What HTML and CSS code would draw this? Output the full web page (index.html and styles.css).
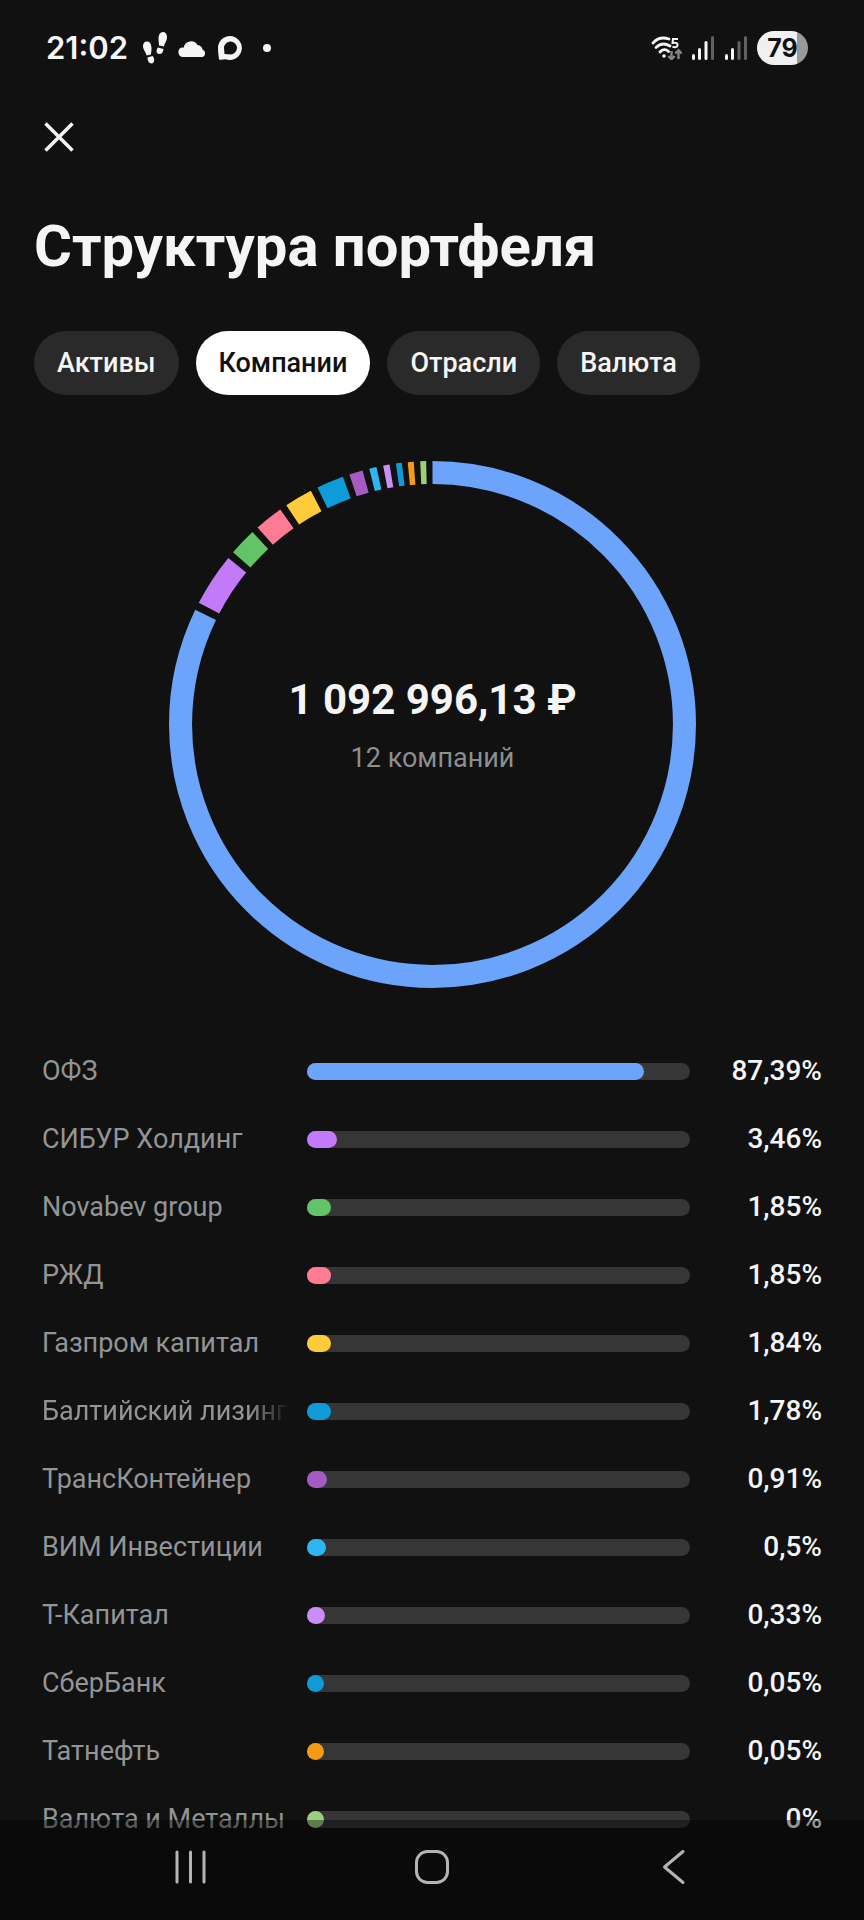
FILE: index.html
```html
<!DOCTYPE html>
<html lang="ru">
<head>
    <meta charset="UTF-8">
    <meta name="viewport" content="width=device-width, initial-scale=1.0">
    <title>Структура портфеля</title>
    <link rel="stylesheet" href="styles.css">
</head>
<body>
    <div class="status-bar">
        <div class="status-left">
            <span class="clock">21:02</span>
            <svg class="icon-steps" viewBox="0 0 26 32" width="26" height="32" fill="currentColor" aria-hidden="true">
                <path d="M1 14c0-3 2-5 4.500-4.500 3 .5 4 3.500 4 7 0 2.500-.5 4-.5 6l-4.500 1C4 20 1 18 1 14z"/>
                <path d="M5.500 25.500l5-1.500c1 1 1.700 2.500 1.700 4 0 2-1 3.500-2.700 3.500-2.500 0-4-3-4-6z"/>
                <path d="M25 5c0-3-1.500-5-4-5-3 0-4.500 3-4.500 7 0 2.500.5 4 .5 6.500l5 1C22.500 11 25 9 25 5z"/>
                <path d="M16 15.500l5.500 1.500c0 3-1.800 5-4 5-1.800 0-3-1-3-2.700 0-1.500.7-2.800 1.500-3.800z"/>
            </svg>
            <svg class="icon-cloud" viewBox="0 0 30 17" width="30" height="17" fill="currentColor" aria-hidden="true">
                <path d="M5 17a5 5 0 0 1-.3-9.500c1 0 1.500 0 2 .2A7.500 7.500 0 0 1 20.500 5c3 .2 4.500 2 5 4.500A4 4 0 0 1 25.500 17z"/>
            </svg>
            <svg class="icon-chat" viewBox="0 0 26 26" width="26" height="26" aria-hidden="true">
                <path fill="currentColor" fill-rule="evenodd" d="M13 1a12 12 0 1 1-4.500 23.200C6.500 24.500 4 25 2 24.500 1.500 20 1 17 1 13A12 12 0 0 1 13 1zm.5 5.500a6.500 6.500 0 0 0-6.500 6.500c0 2 .5 4 .5 6 2 .3 4 .5 6 .5a6.500 6.500 0 0 0 0-13z"/>
            </svg>
            <span class="more-dot"></span>
        </div>
        <div class="status-right">
            <svg viewBox="0 0 32 24" width="32" height="24" fill="none" stroke="currentColor" aria-hidden="true">
                <g stroke-width="2.800" stroke-linecap="round">
                    <path d="M3 7C8 1.500 13 1 19 3"/>
                    <path d="M6 11.500C10 7.500 15 7 20 10"/>
                    <path d="M10 16c2.500-3 6-3 8.500-.5"/>
                </g>
                <circle cx="14" cy="20" r="1.800" fill="currentColor" stroke="none"/>
                <path d="M28 3h-5l-.5 4c4-1 5.500.5 5 2.500-.4 1.800-3 2.200-5 1.200" stroke-width="2"/>
                <g class="dim" stroke-width="2.400">
                    <path d="M21.500 15v8M18.300 20l3.200 3.200L24.700 20"/>
                    <path d="M28.500 23v-8M25.300 17.500l3.200-3.200 3.200 3.200"/>
                </g>
            </svg>
            <svg viewBox="0 0 24 24" width="24" height="24" fill="currentColor" aria-hidden="true">
                <rect x="1" y="18" width="3" height="6" rx="1.500"/>
                <rect x="7" y="12" width="3" height="12" rx="1.500"/>
                <rect x="13.500" y="5" width="3" height="19" rx="1.500"/>
                <rect class="faint" x="20" y="0" width="3" height="24" rx="1.500"/>
            </svg>
            <svg viewBox="0 0 24 24" width="24" height="24" fill="currentColor" aria-hidden="true">
                <rect x="1" y="18" width="3" height="6" rx="1.500"/>
                <rect x="7" y="12" width="3" height="12" rx="1.500"/>
                <rect class="faint" x="13.500" y="5" width="3" height="19" rx="1.500"/>
                <rect class="faint" x="20" y="0" width="3" height="24" rx="1.500"/>
            </svg>
            <span class="battery">79</span>
        </div>
    </div>

    <header>
        <button type="button" class="close-button" aria-label="Закрыть">
            <svg viewBox="0 0 30 30" width="30" height="30" fill="none" stroke="currentColor" stroke-width="3.500" aria-hidden="true">
                <path d="M1.500 1.500l27 27M28.500 1.500l-27 27"/>
            </svg>
        </button>
        <h1>Структура портфеля</h1>
        <div class="tabs">
            <button type="button">Активы</button>
            <button type="button" class="active">Компании</button>
            <button type="button">Отрасли</button>
            <button type="button">Валюта</button>
        </div>
    </header>

    <main>
        <section class="chart">
            <!-- pathLength is 360, so dashes and offsets are in degrees from the top -->
            <svg class="donut" viewBox="0 0 526 526" aria-hidden="true">
                <g fill="none" stroke-width="23" transform="rotate(-90 263 263)">
                    <circle class="c-blue" cx="263" cy="263" r="251.500" pathLength="360" stroke-dasharray="295.800 360"/>
                    <circle class="c-purple" cx="263" cy="263" r="251.500" pathLength="360" stroke-dasharray="11.700 360" stroke-dashoffset="-297.500"/>
                    <circle class="c-green" cx="263" cy="263" r="251.500" pathLength="360" stroke-dasharray="6.100 360" stroke-dashoffset="-310.800"/>
                    <circle class="c-pink" cx="263" cy="263" r="251.500" pathLength="360" stroke-dasharray="6.300 360" stroke-dashoffset="-318.400"/>
                    <circle class="c-yellow" cx="263" cy="263" r="251.500" pathLength="360" stroke-dasharray="6.200 360" stroke-dashoffset="-326.300"/>
                    <circle class="c-ocean" cx="263" cy="263" r="251.500" pathLength="360" stroke-dasharray="6 360" stroke-dashoffset="-334.100"/>
                    <circle class="c-violet" cx="263" cy="263" r="251.500" pathLength="360" stroke-dasharray="3 360" stroke-dashoffset="-341.600"/>
                    <circle class="c-sky" cx="263" cy="263" r="251.500" pathLength="360" stroke-dasharray="1.600 360" stroke-dashoffset="-346.100"/>
                    <circle class="c-lilac" cx="263" cy="263" r="251.500" pathLength="360" stroke-dasharray="1.400 360" stroke-dashoffset="-349.200"/>
                    <circle class="c-ocean" cx="263" cy="263" r="251.500" pathLength="360" stroke-dasharray="1.300 360" stroke-dashoffset="-352"/>
                    <circle class="c-orange" cx="263" cy="263" r="251.500" pathLength="360" stroke-dasharray="1.300 360" stroke-dashoffset="-354.600"/>
                    <circle class="c-lime" cx="263" cy="263" r="251.500" pathLength="360" stroke-dasharray="1.300 360" stroke-dashoffset="-357.300"/>
                </g>
            </svg>
            <div class="total">
                <p class="amount">1 092 996,13 ₽</p>
                <p class="count">12 компаний</p>
            </div>
        </section>

        <ul class="companies">
            <li><span class="name">ОФЗ</span><div class="track"><div class="fill c-blue" style="--share: 0.8739"></div></div><span class="percent">87,39%</span></li>
            <li><span class="name">СИБУР Холдинг</span><div class="track"><div class="fill c-purple" style="--share: 0.0346"></div></div><span class="percent">3,46%</span></li>
            <li><span class="name">Novabev group</span><div class="track"><div class="fill c-green" style="--share: 0.0185"></div></div><span class="percent">1,85%</span></li>
            <li><span class="name">РЖД</span><div class="track"><div class="fill c-pink" style="--share: 0.0185"></div></div><span class="percent">1,85%</span></li>
            <li><span class="name">Газпром капитал</span><div class="track"><div class="fill c-yellow" style="--share: 0.0184"></div></div><span class="percent">1,84%</span></li>
            <li><span class="name faded">Балтийский лизинг</span><div class="track"><div class="fill c-ocean" style="--share: 0.0178"></div></div><span class="percent">1,78%</span></li>
            <li><span class="name">ТрансКонтейнер</span><div class="track"><div class="fill c-violet" style="--share: 0.0091"></div></div><span class="percent">0,91%</span></li>
            <li><span class="name">ВИМ Инвестиции</span><div class="track"><div class="fill c-sky" style="--share: 0.005"></div></div><span class="percent">0,5%</span></li>
            <li><span class="name">Т-Капитал</span><div class="track"><div class="fill c-lilac" style="--share: 0.0033"></div></div><span class="percent">0,33%</span></li>
            <li><span class="name">СберБанк</span><div class="track"><div class="fill c-ocean" style="--share: 0.0005"></div></div><span class="percent">0,05%</span></li>
            <li><span class="name">Татнефть</span><div class="track"><div class="fill c-orange" style="--share: 0.0005"></div></div><span class="percent">0,05%</span></li>
            <li><span class="name">Валюта и Металлы</span><div class="track"><div class="fill c-lime" style="--share: 0"></div></div><span class="percent">0%</span></li>
        </ul>
    </main>

    <nav class="system-nav">
        <button type="button" aria-label="Недавние">
            <svg viewBox="0 0 36 36" width="36" height="36" fill="none" stroke="currentColor" stroke-width="3" stroke-linecap="round" aria-hidden="true">
                <path d="M4 3v30M17.500 3v30M31 3v30"/>
            </svg>
        </button>
        <button type="button" aria-label="Домой">
            <svg viewBox="0 0 36 36" width="36" height="36" fill="none" stroke="currentColor" stroke-width="3" aria-hidden="true">
                <rect x="2.500" y="2.500" width="31" height="31" rx="11"/>
            </svg>
        </button>
        <button type="button" aria-label="Назад">
            <svg viewBox="0 0 36 36" width="36" height="36" fill="none" stroke="currentColor" stroke-width="3" stroke-linecap="round" stroke-linejoin="round" aria-hidden="true">
                <path d="M28 2.500L9.500 18 28 33.500"/>
            </svg>
        </button>
    </nav>
</body>
</html>
```
FILE: styles.css
```css
* {
    box-sizing: border-box;
}

body {
    margin: 0;
    min-height: 100vh;
    background-color: #111111;
    color: #f5f5f5;
    font-family: Roboto, "Liberation Sans", sans-serif;
}

button {
    border: none;
    padding: 0;
    background: none;
    color: inherit;
    font-family: inherit;
    cursor: pointer;
}

svg {
    display: block;
}

/* status bar */
.status-bar {
    display: flex;
    justify-content: space-between;
    align-items: center;
    height: 96px;
    padding: 0 56px 0 46px;
}

.status-left, .status-right {
    display: flex;
    align-items: center;
}

.clock {
    margin-right: 14px;
    font-family: Inter, sans-serif;
    font-size: 31px;
    font-weight: 600;
    line-height: 36px;
}

.icon-steps {
    margin-right: 9px;
}

.icon-cloud {
    margin-right: 10px;
}

.more-dot {
    width: 8px;
    height: 8px;
    margin-left: 20px;
    border-radius: 50%;
    background-color: #f5f5f5;
}

.status-right {
    gap: 9px;
}

.dim {
    opacity: 0.5;
}

.faint {
    opacity: 0.35;
}

.battery {
    width: 51px;
    height: 34px;
    border-radius: 17px;
    background: linear-gradient(to right, #f0f0f0 79%, #999999 79%);
    color: #111111;
    font-family: Inter, sans-serif;
    font-size: 25px;
    font-weight: 700;
    line-height: 35px;
    text-align: center;
}

/* header */
header {
    padding: 0 34px;
}

.close-button {
    display: flex;
    align-items: center;
    height: 82px;
    padding: 0 10px;
}

h1 {
    margin: 34px 0 0;
    font-size: 58px;
    font-weight: 700;
    line-height: 68px;
}

.tabs {
    display: flex;
    gap: 17px;
    margin-top: 51px;
}

.tabs button {
    height: 64px;
    padding: 0 23px;
    border-radius: 32px;
    background-color: #2a2a2a;
    font-size: 27px;
    font-weight: 500;
}

.tabs .active {
    background-color: #ffffff;
    color: #111111;
}

/* chart */
.chart {
    display: grid;
    place-items: center;
    margin: 66px 168px 0 169px;
}

.chart > * {
    grid-area: 1 / 1;
}

.donut {
    width: 100%;
    max-width: 560px;
}

.total {
    text-align: center;
}

.total p {
    margin: 0;
}

.amount {
    font-size: 42px;
    font-weight: 700;
    line-height: 48px;
}

.count {
    padding-top: 18px;
    color: #8c8e90;
    font-size: 27px;
    line-height: 32px;
}

/* companies */
.companies {
    margin: 49px 0 0;
    padding: 0 42px;
    list-style: none;
}

.companies li {
    display: grid;
    grid-template-columns: 265px 1fr 132px;
    align-items: center;
    height: 68px;
}

.name {
    margin-right: 18px;
    overflow: hidden;
    white-space: nowrap;
    color: #929496;
    font-size: 27px;
    line-height: 36px;
}

.name.faded {
    mask-image: linear-gradient(to right, #000 84%, transparent 100%);
}

.track {
    height: 17px;
    border-radius: 9px;
    background-color: #363636;
}

.fill {
    width: calc(17px + (100% - 17px) * var(--share));
    height: 17px;
    border-radius: 9px;
    background-color: var(--color);
}

.percent {
    font-size: 28px;
    font-weight: 500;
    line-height: 36px;
    text-align: right;
}

circle[pathLength] {
    stroke: var(--color);
}

.c-blue { --color: #6ca3fb; }
.c-purple { --color: #c27afa; }
.c-green { --color: #62c466; }
.c-pink { --color: #ff7a93; }
.c-yellow { --color: #ffcb3a; }
.c-ocean { --color: #0f9bd7; }
.c-violet { --color: #a45cc4; }
.c-sky { --color: #2fb5f3; }
.c-lilac { --color: #c98ef8; }
.c-orange { --color: #f59a14; }
.c-lime { --color: #9ccf7c; }

/* system navigation */
.system-nav {
    position: fixed;
    right: 0;
    bottom: 0;
    left: 0;
    display: flex;
    padding: 0 70px;
    background-color: rgba(0, 0, 0, 0.4);
    color: #b4b4b4;
}

.system-nav button {
    display: flex;
    flex: 1;
    justify-content: center;
    padding: 29px 0 35px;
}
```
